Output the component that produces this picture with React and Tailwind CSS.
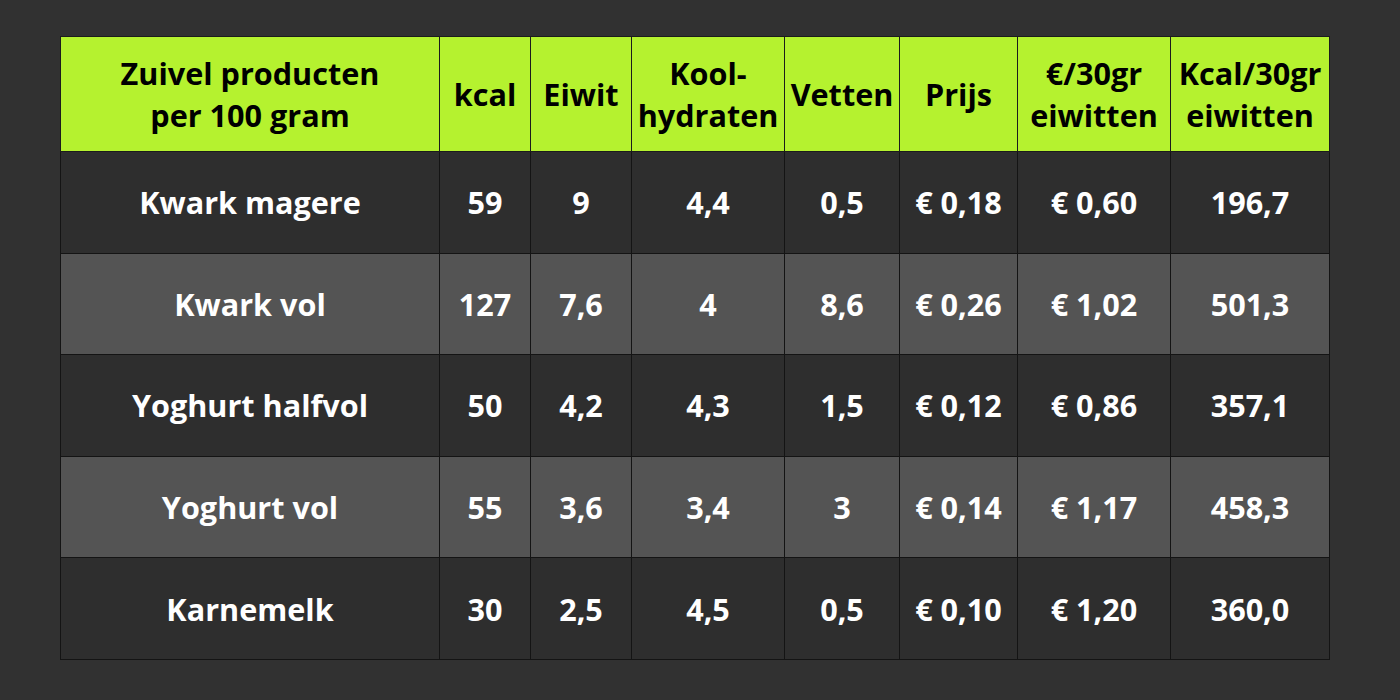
export default function App() {
  const cols = [
    { label: ["Zuivel producten", "per 100 gram"], w: "w-[379px]" },
    { label: ["kcal"], w: "w-[91px]" },
    { label: ["Eiwit"], w: "w-[101px]" },
    { label: ["Kool-", "hydraten"], w: "w-[153px]" },
    { label: ["Vetten"], w: "w-[115px]" },
    { label: ["Prijs"], w: "w-[118px]" },
    { label: ["€/30gr", "eiwitten"], w: "w-[153px]" },
    { label: ["Kcal/30gr", "eiwitten"], w: "w-[159px]" },
  ];

  const rows = [
    ["Kwark magere", "59", "9", "4,4", "0,5", "€ 0,18", "€ 0,60", "196,7"],
    ["Kwark vol", "127", "7,6", "4", "8,6", "€ 0,26", "€ 1,02", "501,3"],
    ["Yoghurt halfvol", "50", "4,2", "4,3", "1,5", "€ 0,12", "€ 0,86", "357,1"],
    ["Yoghurt vol", "55", "3,6", "3,4", "3", "€ 0,14", "€ 1,17", "458,3"],
    ["Karnemelk", "30", "2,5", "4,5", "0,5", "€ 0,10", "€ 1,20", "360,0"],
  ];

  return (
    <div
      className="w-[1400px] h-[700px] bg-[#313131] pt-[36px] pl-[60px]"
      style={{ fontFamily: '"Open Sans", sans-serif' }}
    >
      <table className="border-collapse table-fixed text-[30.6px] font-bold leading-[42px]">
        <thead>
          <tr className="bg-[#b5f22f] text-black h-[115px]">
            {cols.map((c, i) => (
              <th key={i} className={`${c.w} border border-[#1c1c1c] text-center font-bold p-0`}>
                {c.label.map((l) => (
                  <div key={l}>{l}</div>
                ))}
              </th>
            ))}
          </tr>
        </thead>
        <tbody>
          {rows.map((r, ri) => (
            <tr
              key={ri}
              className={`h-[101.6px] text-white ${ri % 2 === 0 ? "bg-[#2e2e2e]" : "bg-[#545454]"}`}
            >
              {r.map((v, ci) => (
                <td key={ci} className="border border-[#141414] text-center p-0">
                  {v}
                </td>
              ))}
            </tr>
          ))}
        </tbody>
      </table>
    </div>
  );
}
